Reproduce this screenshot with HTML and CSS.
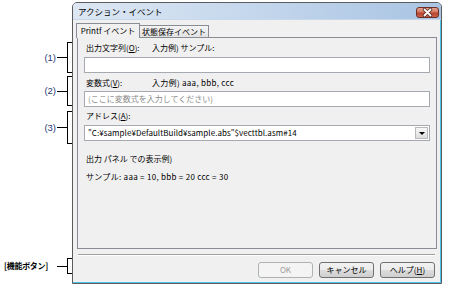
FILE: index.html
```html
<!DOCTYPE html>
<html lang="ja">
<head>
    <meta charset="UTF-8">
    <title>アクション・イベント</title>
    <link rel="stylesheet" href="styles.css">
</head>
<body>
    <div class="page">
        <div class="notes">
            <div class="note note-1">
                <span class="note-label">(1)</span>
                <span class="note-dash"></span>
                <span class="note-bracket"></span>
            </div>
            <div class="note note-2">
                <span class="note-label">(2)</span>
                <span class="note-dash"></span>
                <span class="note-bracket"></span>
            </div>
            <div class="note note-3">
                <span class="note-label">(3)</span>
                <span class="note-dash"></span>
                <span class="note-bracket"></span>
            </div>
            <div class="note note-4">
                <span class="note-label note-label-buttons">[機能ボタン]</span>
                <span class="note-dash"></span>
                <span class="note-bracket"></span>
            </div>
        </div>

        <div class="dialog">
            <div class="titlebar">
                <span class="title">アクション・イベント</span>
                <span class="close-btn">
                    <svg width="21" height="9" viewBox="0 0 21 9">
                        <path d="M7.5 1.5 L13.5 7.5 M13.5 1.5 L7.5 7.5" stroke="#5a2a20" stroke-width="3.4" stroke-linecap="round"/>
                        <path d="M7.5 1.5 L13.5 7.5 M13.5 1.5 L7.5 7.5" stroke="#ffffff" stroke-width="1.8" stroke-linecap="round"/>
                    </svg>
                </span>
            </div>

            <div class="dialog-body">
                <div class="tabs">
                    <span class="tab tab-active">Printf イベント</span>
                    <span class="tab">状態保存イベント</span>
                </div>

                <div class="panel">
                    <div class="field-label field-label-first">
                        <span class="label-name">出力文字列(<u>O</u>):</span>
                        <span>入力例) サンプル:</span>
                    </div>
                    <div class="textbox"></div>

                    <div class="field-label">
                        <span class="label-name">変数式(<u>V</u>):</span>
                        <span class="latin-wide">入力例) aaa, bbb, ccc</span>
                    </div>
                    <div class="textbox textbox-2"><span class="placeholder">(ここに変数式を入力してください)</span></div>

                    <div class="field-label field-label-3">
                        <span class="label-name">アドレス(<u>A</u>):</span>
                    </div>
                    <div class="combo">
                        <span class="combo-text">"C:¥sample¥DefaultBuild¥sample.abs"$vecttbl.asm#14</span>
                        <span class="combo-btn"><span class="arrow"></span></span>
                    </div>

                    <div class="sample-title">出力 パネル での表示例)</div>
                    <div class="sample-text latin-wide">サンプル: aaa = 10, bbb = 20 ccc = 30</div>
                </div>

                <div class="separator"></div>

                <div class="buttons">
                    <span class="btn btn-disabled">OK</span>
                    <span class="btn">キャンセル</span>
                    <span class="btn">ヘルプ(<u>H</u>)</span>
                </div>
            </div>
        </div>
    </div>
</body>
</html>
```

FILE: styles.css
```css
body {
    margin: 0;
    background-color: #ffffff;
    font-family: "Noto Sans CJK JP", sans-serif;
    font-size: 8px;
    color: #000;
}
u {
    text-decoration: underline;
}
.page {
    display: flex;
    padding-top: 2px;
}

/* 左側の注釈 */
.notes {
    width: 72px;
    flex: none;
    display: flex;
    flex-direction: column;
}
.note {
    display: flex;
    align-items: center;
    justify-content: flex-end;
}
.note-1 {
    margin-top: 40px;
    height: 31px;
}
.note-2 {
    margin-top: 3px;
    height: 30px;
}
.note-3 {
    margin-top: 5px;
    height: 33px;
}
.note-4 {
    margin-top: 114px;
    height: 16px;
}
.note-label {
    font-family: "Liberation Sans", sans-serif;
    font-size: 9.5px;
    color: #1f3a78;
    margin-right: 1px;
    line-height: 12px;
}
.note-label-buttons {
    font-family: "Noto Sans CJK JP", sans-serif;
    font-size: 8px;
    font-weight: bold;
    color: #000;
    letter-spacing: -0.3px;
    margin-right: 9px;
}
.note-dash {
    width: 10px;
    height: 1px;
    background-color: #000;
}
.note-bracket {
    width: 4px;
    align-self: stretch;
    border: 1px solid #000;
    border-right: none;
}

/* ダイアログ */
.dialog {
    width: 370px;
    height: 282px;
    box-sizing: border-box;
    border: 1px solid #5c5c5c;
    border-radius: 5px 5px 0 0;
    background-color: #f0f0f0;
    box-shadow: inset -1px -1px 0 #4cc4ea;
    display: flex;
    flex-direction: column;
    overflow: hidden;
}
.titlebar {
    height: 17px;
    flex: none;
    display: flex;
    align-items: flex-start;
    justify-content: space-between;
    background: linear-gradient(to right, #dde7f3 0%, #c9daee 40%, #a9c4e3 100%);
    border-bottom: 1px solid #c8d8ea;
    box-sizing: border-box;
}
.title {
    font-size: 8.5px;
    line-height: 17px;
    padding-left: 5px;
}
.close-btn {
    width: 23px;
    height: 11px;
    box-sizing: border-box;
    margin-top: 4px;
    margin-right: 2px;
    border: 1px solid #6e3026;
    border-radius: 3px;
    background: linear-gradient(#e7a593 0%, #d27560 45%, #b8432d 55%, #c9604c 100%);
    display: flex;
    align-items: center;
    justify-content: center;
}
.dialog-body {
    flex: 1;
    display: flex;
    flex-direction: column;
    padding: 0 4px;
}

/* タブ */
.tabs {
    display: flex;
    align-items: flex-start;
    height: 14px;
    margin-top: 3px;
    position: relative;
    z-index: 1;
}
.tab {
    box-sizing: border-box;
    height: 12px;
    margin-top: 2px;
    width: 70px;
    margin-left: -1px;
    border: 1px solid #898c95;
    border-bottom: none;
    background: linear-gradient(#f4f4f4, #e3e3e3);
    line-height: 11px;
    text-align: center;
}
.tab-active {
    width: 64px;
    height: 15px;
    margin-top: 0;
    margin-left: -1px;
    background: #f0f0f0;
    line-height: 14px;
    position: relative;
    z-index: 2;
}
.panel {
    height: 212px;
    box-sizing: border-box;
    border: 1px solid #898c95;
    background-color: #f0f0f0;
    padding: 3px 6px 0 6px;
}
.field-label {
    display: flex;
    line-height: 14px;
    height: 14px;
    padding-left: 2px;
    margin-top: 3px;
}
.field-label-first {
    margin-top: 0;
}
.field-label-3 {
    margin-top: 2px;
}
.label-name {
    width: 66px;
    flex: none;
}
.latin-wide {
    letter-spacing: 0.3px;
}
.textbox {
    height: 16px;
    margin-top: 2px;
    box-sizing: border-box;
    border: 1px solid #a5a9b0;
    background-color: #ffffff;
}
.textbox-2 {
    margin-top: 1px;
    line-height: 14px;
    padding-left: 3px;
}
.placeholder {
    color: #8a8a8a;
}
.combo {
    height: 16px;
    margin-top: 2px;
    box-sizing: border-box;
    border: 1px solid #a5a9b0;
    background-color: #ffffff;
    display: flex;
    align-items: center;
    justify-content: space-between;
    padding: 0 0 0 3px;
}
.combo-text {
    line-height: 14px;
    white-space: nowrap;
    letter-spacing: 0.05px;
}
.combo-btn {
    width: 13px;
    height: 12px;
    box-sizing: border-box;
    margin-right: 1px;
    border: 1px solid #b9b9b9;
    background: linear-gradient(#f7f7f7, #dedede);
    display: flex;
    align-items: center;
    justify-content: center;
}
.arrow {
    width: 0;
    height: 0;
    border-left: 3px solid transparent;
    border-right: 3px solid transparent;
    border-top: 3px solid #000;
    margin-top: 1px;
}
.sample-title {
    line-height: 14px;
    margin-top: 11px;
    padding-left: 2px;
}
.sample-text {
    line-height: 14px;
    margin-top: 4px;
    padding-left: 2px;
}

/* 機能ボタン */
.separator {
    height: 2px;
    box-sizing: border-box;
    margin: 5px 2px 0 1px;
    border-top: 1px solid #a0a0a0;
    border-bottom: 1px solid #ffffff;
}
.buttons {
    display: flex;
    justify-content: flex-end;
    gap: 6px;
    margin-top: 6px;
    padding-right: 2px;
}
.btn {
    width: 55px;
    height: 16px;
    box-sizing: border-box;
    border: 1px solid #707070;
    border-radius: 3px;
    background: linear-gradient(#f2f2f2 0%, #ebebeb 50%, #dddddd 50%, #cfcfcf 100%);
    text-align: center;
    line-height: 14px;
}
.btn-disabled {
    border-color: #adb2b5;
    background: #f4f4f4;
    color: #9a9a9a;
}
```
